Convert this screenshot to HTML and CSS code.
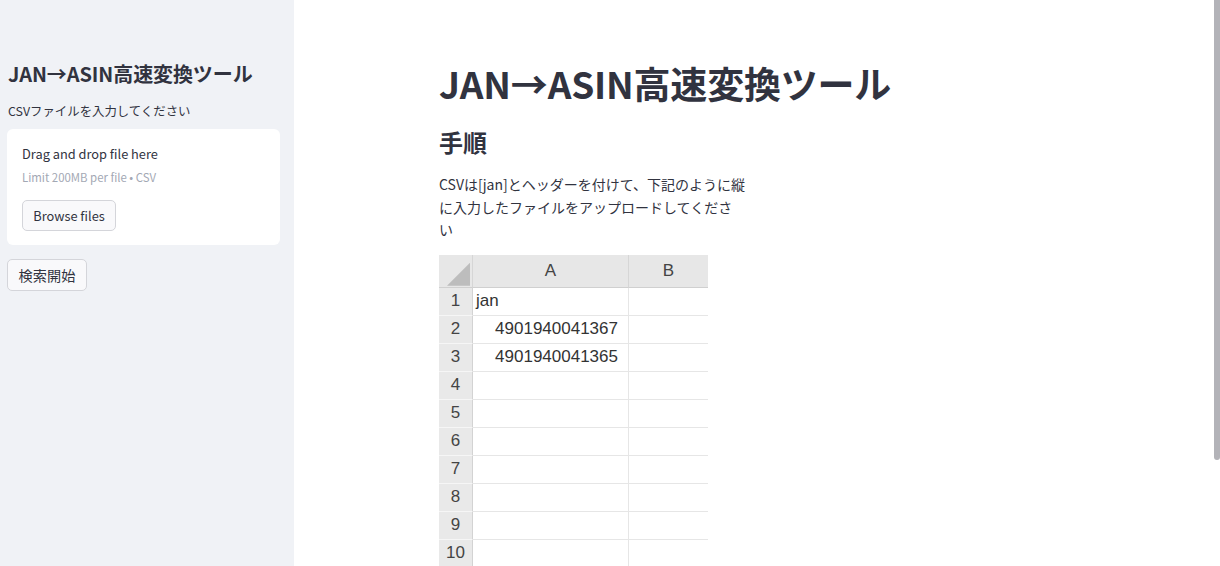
FILE: index.html
```html
<!DOCTYPE html>
<html lang="ja">
<head>
<meta charset="utf-8">
<title>JAN→ASIN高速変換ツール</title>
<link rel="stylesheet" href="styles.css">
</head>
<body>
<aside class="sidebar">
  <h1 class="side-title">JAN→ASIN高速変換ツール</h1>
  <div class="label">CSVファイルを入力してください</div>
  <section class="uploader">
    <div class="drop-title">Drag and drop file here</div>
    <div class="drop-limit">Limit 200MB per file • CSV</div>
    <button class="btn browse">Browse files</button>
  </section>
  <button class="btn start">検索開始</button>
</aside>
<main class="main">
  <div class="container">
    <h1 class="title">JAN→ASIN高速変換ツール</h1>
    <h2 class="subtitle">手順</h2>
    <p class="desc">CSVは[jan]とヘッダーを付けて、下記のように縦<br>に入力したファイルをアップロードしてくださ<br>い</p>
    <div class="sheet">
      <div class="corner"><span class="tri"></span></div>
      <div class="colhead">A</div>
      <div class="colhead last">B</div>

      <div class="rowhead">1</div><div class="cell left">jan</div><div class="cell"></div>
      <div class="rowhead">2</div><div class="cell num">4901940041367</div><div class="cell"></div>
      <div class="rowhead">3</div><div class="cell num">4901940041365</div><div class="cell"></div>
      <div class="rowhead">4</div><div class="cell"></div><div class="cell"></div>
      <div class="rowhead">5</div><div class="cell"></div><div class="cell"></div>
      <div class="rowhead">6</div><div class="cell"></div><div class="cell"></div>
      <div class="rowhead">7</div><div class="cell"></div><div class="cell"></div>
      <div class="rowhead">8</div><div class="cell"></div><div class="cell"></div>
      <div class="rowhead">9</div><div class="cell"></div><div class="cell"></div>
      <div class="rowhead">10</div><div class="cell"></div><div class="cell"></div>
    </div>
  </div>
  <div class="scrollbar"></div>
</main>
</body>
</html>
```

FILE: styles.css
```css
* { box-sizing: border-box; }
html, body {
  margin: 0;
  height: 100%;
  overflow: hidden;
}
body {
  display: flex;
  font-family: "Noto Sans CJK JP", "Noto Sans", sans-serif;
  color: #31333f;
  background: #ffffff;
  font-size: 14.4px;
}

/* Sidebar */
.sidebar {
  width: 294px;
  flex: none;
  height: 100vh;
  background: #f0f2f6;
  padding: 59px 14px 0 7px;
  display: flex;
  flex-direction: column;
  align-items: flex-start;
}
.side-title {
  margin: 0 0 0 1px;
  font-size: 20px;
  line-height: 30px;
  font-weight: 700;
  letter-spacing: -0.1px;
}
.label {
  margin: 13px 0 0 1px;
  font-size: 12.4px;
  line-height: 18px;
}
.uploader {
  align-self: stretch;
  margin-top: 9px;
  height: 116px;
  background: #ffffff;
  border-radius: 6px;
  padding: 15px 15px 0 15px;
  display: flex;
  flex-direction: column;
  align-items: flex-start;
}
.drop-title {
  font-size: 12.8px;
  line-height: 20px;
}
.drop-limit {
  margin-top: 5px;
  font-size: 11.4px;
  line-height: 16px;
  color: #a3a8b4;
}
.btn {
  font-family: inherit;
  color: #31333f;
  background: #f9f9fb;
  border: 1px solid #d4d5da;
  border-radius: 5px;
  line-height: 20px;
  padding: 0;
  cursor: pointer;
}
.browse {
  margin-top: 15px;
  width: 94px;
  height: 31px;
  font-size: 12.8px;
}
.start {
  margin-top: 14px;
  width: 80px;
  height: 32px;
  font-size: 14.2px;
}

/* Main */
.main {
  flex: 1;
  height: 100vh;
  overflow: hidden;
  position: relative;
}
.scrollbar {
  position: absolute;
  top: 0;
  right: 0;
  width: 6px;
  height: 460px;
  background: #b3b3b8;
  border-radius: 0 0 3px 3px;
}
.container {
  width: 636px;
  margin: 0 auto;
  padding: 55px 0 0;
}
.title {
  margin: 0;
  font-size: 37px;
  line-height: 56px;
  font-weight: 700;
  letter-spacing: -0.2px;
}
.subtitle {
  margin: 14px 0 0;
  font-size: 24px;
  line-height: 34px;
  font-weight: 700;
}
.desc {
  margin: 14px 0 0;
  font-size: 14px;
  line-height: 22.6px;
}

/* Spreadsheet picture */
.sheet {
  margin-top: 14px;
  display: grid;
  grid-template-columns: 34px 156px 79px;
  grid-template-rows: 33px;
  grid-auto-rows: 28px;
  width: 269px;
  font-family: "Liberation Sans", "Noto Sans", sans-serif;
  color: #333333;
  font-size: 17px;
}
.corner {
  background: #e7e7e7;
  border-right: 1px solid #d6d6d6;
  border-bottom: 1px solid #d0d0d0;
  position: relative;
}
.tri {
  position: absolute;
  left: 8px;
  top: 8px;
  width: 23px;
  height: 23px;
  background: #bdbdbd;
  clip-path: polygon(100% 0, 100% 100%, 0 100%);
}
.colhead {
  background: #e7e7e7;
  border-right: 1px solid #d6d6d6;
  border-bottom: 1px solid #d0d0d0;
  display: flex;
  align-items: center;
  justify-content: center;
  font-size: 17px;
  color: #444444;
}
.colhead.last { border-right: none; }
.rowhead {
  background: #e9e9e9;
  border-right: 1px solid #d3d3d3;
  border-bottom: 1px solid #f6f6f6;
  display: flex;
  align-items: center;
  justify-content: center;
  font-size: 17px;
  color: #444444;
}
.cell {
  border-bottom: 1px solid #e6e6e6;
  border-right: 1px solid #e6e6e6;
  display: flex;
  align-items: center;
  white-space: nowrap;
}
.cell:nth-child(3n) { border-right: none; }
.cell.left { padding-left: 3px; }
.cell.num { justify-content: flex-end; padding-right: 10px; }
```
